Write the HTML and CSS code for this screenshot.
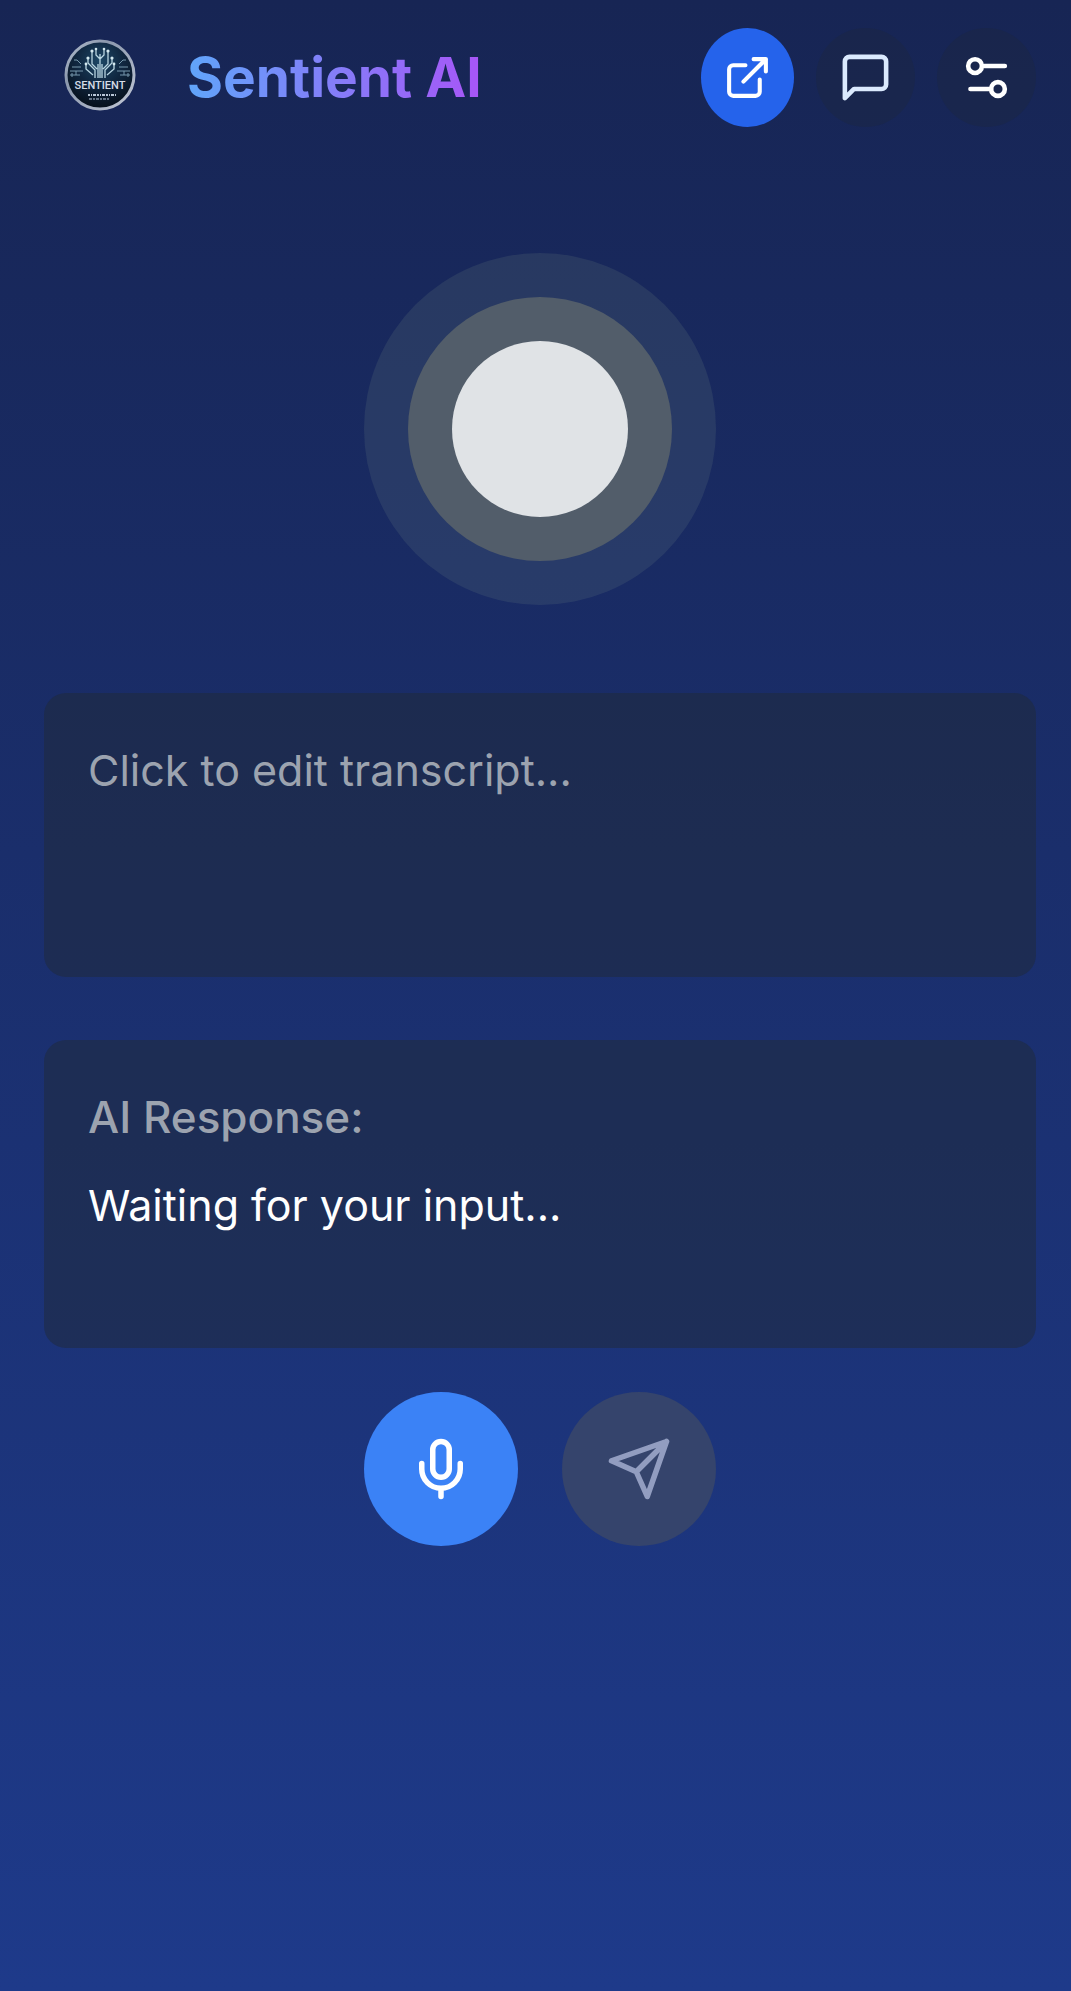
FILE: index.html
```html
<!DOCTYPE html>
<html lang="en">
<head>
<meta charset="utf-8">
<meta name="viewport" content="width=device-width, initial-scale=1">
<title>Sentient AI</title>
<link rel="stylesheet" href="styles.css">
</head>
<body>
<header class="topbar">
  <div class="brand">
    <svg class="logo" viewBox="0 0 72 72" role="img" aria-label="Sentient logo">
      <defs>
        <radialGradient id="disc" cx="50%" cy="30%" r="70%">
          <stop offset="0" stop-color="#1d4866"/>
          <stop offset="0.5" stop-color="#10263f"/>
          <stop offset="1" stop-color="#060f1a"/>
        </radialGradient>
        <linearGradient id="rim" x1="0" y1="0" x2="1" y2="1">
          <stop offset="0" stop-color="#b4bfce"/>
          <stop offset="0.3" stop-color="#8b98ad"/>
          <stop offset="0.7" stop-color="#a9b2c4"/>
          <stop offset="1" stop-color="#c3c9d6"/>
        </linearGradient>
      </defs>
      <circle cx="36" cy="36" r="34" fill="url(#disc)" stroke="url(#rim)" stroke-width="3"/>
      <g class="logo-tree">
        <path d="M34 39V25M38 39V25M36 39V15M31 39V31L24 24V20M41 39V31L48 24V20M33 30L28 25V13M39 30L44 25V13M29 36L22 30V26M43 36L50 30V26M36 20L32 16V11M36 20L40 16V11"/>
      </g>
      <g class="logo-circuit">
        <path d="M8 28H17M6 32H19M12 36V32M8 38V34M17 25L13 21H10M6 36H16M55 28H64M53 32H66M60 36V32M64 38V34M55 25L59 21H62M56 36H66"/>
      </g>
      <g fill="#d3e8ef">
        <circle cx="28" cy="12" r="1.6"/><circle cx="44" cy="12" r="1.6"/><circle cx="24" cy="19" r="1.6"/><circle cx="48" cy="19" r="1.6"/><circle cx="22" cy="25" r="1.4"/><circle cx="50" cy="25" r="1.4"/><circle cx="32" cy="10" r="1.3"/><circle cx="40" cy="10" r="1.3"/>
      </g>
      <text class="logo-text" x="36" y="50" text-anchor="middle">SENTIENT</text>
      <path d="M24 56H52" stroke="#b8c6d6" stroke-width="2" stroke-dasharray="2 1 1 1 3 1"/>
      <path d="M25 60H46" stroke="#8292a6" stroke-width="1.5" stroke-dasharray="3 1 2 1"/>
    </svg>
    <h1 class="title">Sentient AI</h1>
  </div>
  <nav class="actions" aria-label="Main">
    <button class="action action-primary" type="button" aria-label="Open in new window">
      <svg class="icon icon-small" viewBox="0 0 24 24"><path d="M15 3h6v6M10 14 21 3M18 13v6a2 2 0 0 1-2 2H5a2 2 0 0 1-2-2V8a2 2 0 0 1 2-2h6"/></svg>
    </button>
    <button class="action action-chat" type="button" aria-label="Chat">
      <svg class="icon" viewBox="0 0 24 24"><path d="M21 15a2 2 0 0 1-2 2H7l-4 4V5a2 2 0 0 1 2-2h14a2 2 0 0 1 2 2z"/></svg>
    </button>
    <button class="action" type="button" aria-label="Settings">
      <svg class="icon" viewBox="0 0 24 24"><path d="M20 7h-9M14 17H5"/><circle cx="17" cy="17" r="3"/><circle cx="7" cy="7" r="3"/></svg>
    </button>
  </nav>
</header>
<main class="main">
  <div class="orb"><div class="orb-ring"><div class="orb-core"></div></div></div>
  <textarea class="card transcript" aria-label="Transcript" placeholder="Click to edit transcript..."></textarea>
  <section class="card response">
    <h2 class="response-label">AI Response:</h2>
    <p class="response-text">Waiting for your input...</p>
  </section>
  <div class="controls">
    <button class="round round-mic" type="button" aria-label="Start recording">
      <svg class="icon icon-large" viewBox="0 0 24 24"><path d="M12 2a3 3 0 0 0-3 3v7a3 3 0 0 0 6 0V5a3 3 0 0 0-3-3ZM19 10v2a7 7 0 0 1-14 0v-2M12 19v3"/></svg>
    </button>
    <button class="round round-send" type="button" aria-label="Send" disabled>
      <svg class="icon icon-large" viewBox="0 0 24 24"><path d="m22 2-7 20-4-9-9-4ZM22 2 11 13"/></svg>
    </button>
  </div>
</main>
</body>
</html>
```
FILE: styles.css
```css
* { box-sizing: border-box; }

body {
  margin: 0;
  min-height: 100vh;
  background: linear-gradient(to bottom, #172554, #1e3a8a);
  color: #fff;
  font: 400 43px/66px Inter, "Liberation Sans", sans-serif;
}

h1, h2, p { margin: 0; }

button {
  display: flex;
  align-items: center;
  justify-content: center;
  border: 0;
  color: inherit;
  cursor: pointer;
}

.topbar {
  display: flex;
  align-items: center;
  justify-content: space-between;
  padding: 28px 35px 28px 64px;
}

.brand {
  display: flex;
  align-items: flex-start;
  gap: 51px;
}

.logo { width: 72px; height: 72px; }

.logo-tree, .logo-circuit { fill: none; stroke: #b9d6e2; stroke-width: 1.3; }
.logo-circuit { stroke: #7797ac; stroke-width: 1; }

.logo-text {
  font: 500 11px Roboto, "Liberation Sans", sans-serif;
  fill: #d5dce6;
}

.title {
  font-size: 55px;
  font-weight: 700;
  line-height: 77px;
  background: linear-gradient(to right, #60a5fa, #a855f7);
  -webkit-background-clip: text;
  background-clip: text;
  color: transparent;
}

.actions { display: flex; gap: 22px; }

.action {
  padding: 22px;
  border-radius: 50%;
  background: rgba(31, 41, 55, 0.3);
}

.action-primary { background: #2563eb; }
.action-chat { color: #dbeafe; }

.icon {
  display: block;
  width: 55px;
  height: 55px;
  fill: none;
  stroke: currentColor;
  stroke-width: 2;
  stroke-linecap: round;
  stroke-linejoin: round;
}

.icon-small { width: 49px; }
.icon-large { width: 66px; height: 66px; }

.main {
  display: flex;
  flex-direction: column;
  padding: 98px 35px 44px 44px;
}

.orb, .orb-ring, .orb-core { border-radius: 50%; }

.orb {
  align-self: center;
  padding: 44px;
  margin-bottom: 88px;
  background: rgba(160, 185, 150, 0.12);
}

.orb-ring { padding: 44px; background: #525d6a; }
.orb-core { width: 176px; height: 176px; background: #e0e3e6; }

.card {
  width: 100%;
  padding: 44px;
  border: 0;
  border-radius: 22px;
  background: rgba(31, 41, 55, 0.5);
}

.transcript {
  display: block;
  height: 284px;
  margin-bottom: 63px;
  color: #fff;
  font: inherit;
  resize: none;
}

.transcript::placeholder { color: #9ca3af; opacity: 1; }

.response { min-height: 308px; }

.response-label {
  margin-bottom: 22px;
  color: #9ca3af;
  font-size: 44px;
  font-weight: 500;
}

.controls {
  display: flex;
  justify-content: center;
  gap: 44px;
  margin-top: 44px;
}

.round { padding: 44px; border-radius: 50%; }
.round-mic { background: #3b82f6; }
.round-send { background: #35446c; color: #929dc0; cursor: default; }
```
